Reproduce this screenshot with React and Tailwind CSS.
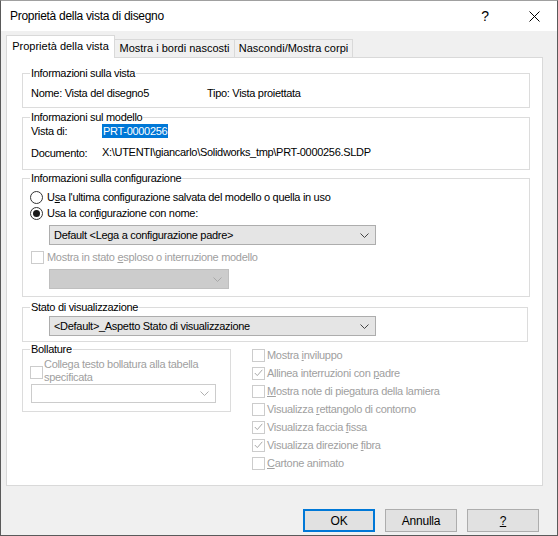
import React from 'react';

const Chevron = ({ color = '#444' }) => (
  <svg width="9" height="5" viewBox="0 0 9 5" className="shrink-0">
    <polyline points="0.5,0.5 4.5,4.5 8.5,0.5" fill="none" stroke={color} strokeWidth="1" />
  </svg>
);

const Check = () => (
  <svg width="9" height="8" viewBox="0 0 9 8">
    <polyline points="0.8,4 3.3,6.6 8.3,0.8" fill="none" stroke="#a8a8a8" strokeWidth="1" />
  </svg>
);

const Box = ({ checked }) => (
  <span className="w-[13px] h-[13px] border border-[#cccccc] bg-white flex items-center justify-center shrink-0">
    {checked && <Check />}
  </span>
);

const Radio = ({ on }) => (
  <span className="w-[13px] h-[13px] rounded-full border border-[#333333] bg-white flex items-center justify-center shrink-0">
    {on && <span className="w-[7px] h-[7px] rounded-full bg-[#1a1a1a]" />}
  </span>
);

const Group = ({ title, className = '', children }) => (
  <fieldset className={`border border-[#dcdcdc] pl-[7px] ${className}`}>
    <legend className="px-[1px] leading-[14px]">{title}</legend>
    {children}
  </fieldset>
);

const Option = ({ checked, children }) => (
  <div className="h-[18px] flex items-center gap-[2px] text-[#a0a0a0]">
    <Box checked={checked} />
    <span>{children}</span>
  </div>
);

export default function App() {
  return (
    <div className="w-[558px] h-[536px] bg-[#f0f0f0] border border-[#5a5a5a] border-t-[#a0a0a0] flex flex-col overflow-hidden text-black font-['Liberation_Sans',Arial,sans-serif]">
      {/* Title bar */}
      <div className="h-[30px] bg-white flex items-center pl-[9px] pr-[17px] shrink-0">
        <span className="flex-1 text-[12px] tracking-[-0.3px]">Proprietà della vista di disegno</span>
        <span className="text-[14px] mr-[40px]">?</span>
        <svg width="11" height="11" viewBox="0 0 11 11">
          <line x1="0.5" y1="0.5" x2="10.5" y2="10.5" stroke="#000" strokeWidth="1" />
          <line x1="10.5" y1="0.5" x2="0.5" y2="10.5" stroke="#000" strokeWidth="1" />
        </svg>
      </div>

      {/* Tabs */}
      <div className="h-[27px] ml-[5px] w-[537px] flex items-end text-[11px] shrink-0">
        <div className="h-[23px] w-[109px] bg-white border-l border-t border-r border-[#d9d9d9] flex items-center justify-center pb-[1px]">
          Proprietà della vista
        </div>
        <div className="h-[19px] w-[120px] border-t border-r border-b border-[#d9d9d9] flex items-center justify-center">
          Mostra i bordi nascosti
        </div>
        <div className="h-[19px] w-[118px] border-t border-r border-b border-[#d9d9d9] flex items-center justify-center">
          Nascondi/Mostra corpi
        </div>
        <div className="flex-1 border-b border-[#d9d9d9]" />
      </div>

      {/* Panel */}
      <div className="ml-[5px] w-[537px] h-[428px] bg-white border-x border-b border-[#d9d9d9] pt-[8px] pl-[15px] text-[11px] tracking-[-0.3px] shrink-0">
        <Group title="Informazioni sulla vista" className="w-[508px] pb-[7px]">
          <div className="h-[14px] mt-[6px] flex items-center pl-[1px]">
            <span className="w-[176px]">Nome: Vista del disegno5</span>
            <span>Tipo: Vista proiettata</span>
          </div>
        </Group>

        <Group title="Informazioni sul modello" className="w-[508px] mt-[2px] pb-[10px]">
          <div className="h-[14px] flex items-center pl-[1px]">
            <span className="w-[71px]">Vista di:</span>
            <span className="bg-[#0078d7] text-white px-[1px] leading-[14px]">PRT-0000256</span>
          </div>
          <div className="h-[14px] mt-[7px] flex items-center pl-[1px]">
            <span className="w-[71px] pt-[2px]">Documento:</span>
            <span>X:\UTENTI\giancarlo\Solidworks_tmp\PRT-0000256.SLDP</span>
          </div>
        </Group>

        <Group title="Informazioni sulla configurazione" className="w-[508px] mt-[1px] pb-[7px]">
          <div className="h-[16px] mt-[4px] flex items-center gap-[4px]">
            <Radio />
            <span>U<span className="underline">s</span>a l'ultima configurazione salvata del modello o quella in uso</span>
          </div>
          <div className="h-[16px] flex items-center gap-[4px]">
            <Radio on />
            <span>Usa la con<span className="underline">f</span>igurazione con nome:</span>
          </div>
          <div className="ml-[19px] mt-[4px] w-[327px] h-[20px] bg-[#e5e5e5] border border-[#adadad] flex items-center justify-between pl-[4px] pr-[6px]">
            <span>{'Default <Lega a configurazione padre>'}</span>
            <Chevron />
          </div>
          <div className="h-[16px] mt-[4px] ml-[1px] flex items-center gap-[3px] text-[#a0a0a0]">
            <Box />
            <span>Mostra in stato <span className="underline">e</span>sploso o interruzione modello</span>
          </div>
          <div className="ml-[19px] mt-[4px] w-[180px] h-[20px] bg-[#cccccc] border border-[#bfbfbf] flex items-center justify-end pr-[6px]">
            <Chevron color="#a8a8a8" />
          </div>
        </Group>

        <Group title="Stato di visualizzazione" className="w-[506px] mt-[3px] pb-[5px]">
          <div className="ml-[19px] mt-[2px] w-[327px] h-[20px] bg-[#e5e5e5] border border-[#adadad] flex items-center justify-between pl-[4px] pr-[6px]">
            <span>{'<Default>_Aspetto Stato di visualizzazione'}</span>
            <Chevron />
          </div>
        </Group>

        <div className="flex">
          <Group title="Bollature" className="w-[209px] pb-[8px] self-start">
            <div className="flex items-start gap-[1px] mt-[2px] text-[#a0a0a0]">
              <span className="mt-[8px]"><Box /></span>
              <span className="leading-[13px]">Collega testo bollatura alla tabella<br />specificata</span>
            </div>
            <div className="ml-[1px] w-[185px] h-[19px] bg-white border border-[#cccccc] flex items-center justify-end pr-[6px]">
              <Chevron color="#b0b0b0" />
            </div>
          </Group>

          <div className="ml-[21px] pt-[4px] flex flex-col">
            <Option>Mostra <span className="underline">i</span>nviluppo</Option>
            <Option checked>Allinea interruzioni con <span className="underline">p</span>adre</Option>
            <Option><span className="underline">M</span>ostra note di piegatura della lamiera</Option>
            <Option>Visualizza <span className="underline">r</span>ettangolo di contorno</Option>
            <Option checked>Visualizza faccia <span className="underline">f</span>issa</Option>
            <Option checked>Visualizza direzione <span className="underline">f</span>ibra</Option>
            <Option><span className="underline">C</span>artone animato</Option>
          </div>
        </div>
      </div>

      {/* Buttons */}
      <div className="flex justify-end gap-[10px] pr-[18px] mt-[23px] text-[12px] tracking-[-0.2px]">
        <button className="w-[72px] h-[23px] bg-[#e1e1e1] border-2 border-[#0078d7]">OK</button>
        <button className="w-[72px] h-[23px] bg-[#e1e1e1] border border-[#adadad]">Annulla</button>
        <button className="w-[72px] h-[23px] bg-[#e1e1e1] border border-[#adadad]"><span className="underline">?</span></button>
      </div>
    </div>
  );
}
